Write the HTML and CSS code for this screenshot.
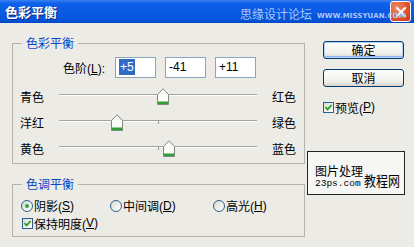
FILE: index.html
```html
<!DOCTYPE html>
<html lang="zh-CN">
<head>
  <meta charset="UTF-8">
  <title>色彩平衡</title>
  <link rel="stylesheet" href="styles.css">
</head>
<body>
  <div class="dialog">
    <div class="titlebar">
      <span class="title">色彩平衡</span>
      <span class="close">
        <svg width="12" height="12" viewBox="0 0 12 12"><path d="M2 2 L10 10 M10 2 L2 10" stroke="#fff" stroke-width="2.2" stroke-linecap="round"/></svg>
      </span>
      <span class="brand"><span class="brand-cn">思缘设计论坛</span><span class="brand-en">WWW.MISSYUAN.COM</span></span>
    </div>

    <div class="content">
      <div class="left">
        <fieldset class="group group-color">
          <legend>色彩平衡</legend>
          <div class="levels">
            <span class="levels-label">色阶(<u>L</u>):</span>
            <span class="field"><span class="sel">+5</span></span>
            <span class="field">-41</span>
            <span class="field">+11</span>
          </div>

          <div class="slider-row">
            <span class="side-a">青色</span>
            <div class="track">
              <span class="thumb" style="left:98px"><svg width="12" height="17" viewBox="0 0 12 17"><path d="M0.5 6.5 L6 0.8 L11.5 6.5 V16.5 H0.5 Z" fill="#fbfbf7" stroke="#7f8a7f"/><rect x="1" y="13.5" width="10" height="2.5" fill="#2f9e36"/></svg></span>
            </div>
            <span class="side-b">红色</span>
          </div>
          <div class="slider-row">
            <span class="side-a">洋红</span>
            <div class="track">
              <span class="thumb" style="left:52px"><svg width="12" height="17" viewBox="0 0 12 17"><path d="M0.5 6.5 L6 0.8 L11.5 6.5 V16.5 H0.5 Z" fill="#fbfbf7" stroke="#7f8a7f"/><rect x="1" y="13.5" width="10" height="2.5" fill="#2f9e36"/></svg></span>
            </div>
            <span class="side-b">绿色</span>
          </div>
          <div class="slider-row">
            <span class="side-a">黄色</span>
            <div class="track">
              <span class="thumb" style="left:104px"><svg width="12" height="17" viewBox="0 0 12 17"><path d="M0.5 6.5 L6 0.8 L11.5 6.5 V16.5 H0.5 Z" fill="#fbfbf7" stroke="#7f8a7f"/><rect x="1" y="13.5" width="10" height="2.5" fill="#2f9e36"/></svg></span>
            </div>
            <span class="side-b">蓝色</span>
          </div>
        </fieldset>

        <fieldset class="group group-tone">
          <legend>色调平衡</legend>
          <div class="radios">
            <span class="radio-item"><span class="radio checked"></span>阴影(<u>S</u>)</span>
            <span class="radio-item"><span class="radio"></span>中间调(<u>D</u>)</span>
            <span class="radio-item"><span class="radio"></span>高光(<u>H</u>)</span>
          </div>
          <div class="check-row">
            <span class="checkbox"><svg width="9" height="9" viewBox="0 0 9 9"><path d="M1.5 4.2 L3.6 6.4 L7.6 2" fill="none" stroke="#21a121" stroke-width="1.8"/></svg></span>保持明度(<u>V</u>)
          </div>
        </fieldset>
      </div>

      <div class="right">
        <button class="btn btn-default">确定</button>
        <button class="btn">取消</button>
        <div class="check-row preview">
          <span class="checkbox"><svg width="9" height="9" viewBox="0 0 9 9"><path d="M1.5 4.2 L3.6 6.4 L7.6 2" fill="none" stroke="#21a121" stroke-width="1.8"/></svg></span>预览(<u>P</u>)
        </div>
        <div class="stamp">
          <div class="stamp-lines">
            <span class="stamp-cn">图片处理</span>
            <span class="stamp-url">23ps.com</span>
          </div>
          <span class="stamp-big">教程网</span>
        </div>
      </div>
    </div>
  </div>
</body>
</html>
```

FILE: styles.css
```css
body {
  margin: 0;
  background: #ecebe6;
  font-family: "Liberation Sans", "Noto Sans CJK SC", sans-serif;
  font-size: 12px;
  color: #000;
}

.dialog {
  width: 414px;
  height: 247px;
  overflow: hidden;
}

/* title bar */
.titlebar {
  position: relative;
  height: 23px;
  display: flex;
  align-items: center;
  padding-left: 5px;
  background: linear-gradient(to bottom, #3a80f3 0%, #0d60e8 15%, #0a5ae4 55%, #0654dc 85%, #0048c4 100%);
}

.title {
  color: #fff;
  font-family: "Noto Sans CJK SC", sans-serif;
  font-weight: bold;
  font-size: 13px;
  line-height: 14px;
  margin-top: 1px;
  text-shadow: 1px 1px 0 #0a2c8a;
}

.brand {
  position: absolute;
  left: 240px;
  top: 7px;
  z-index: 2;
  display: flex;
  align-items: flex-end;
  white-space: nowrap;
  color: #a9c6f8;
}

.brand-cn {
  font-family: "Noto Sans CJK SC", sans-serif;
  font-size: 12px;
  line-height: 14px;
}

.brand-en {
  margin-left: 5px;
  font-family: "DejaVu Sans", sans-serif;
  font-weight: bold;
  font-size: 7px;
  line-height: 10px;
  letter-spacing: 0.1px;
}

.close {
  position: absolute;
  left: 390px;
  top: 1px;
  width: 19px;
  height: 19px;
  border: 1px solid #fff;
  border-radius: 3px;
  background: radial-gradient(circle at 30% 30%, #f08a6a, #e0502a 60%, #c8361a);
  display: flex;
  align-items: center;
  justify-content: center;
}

/* body */
.content {
  display: flex;
}

.left {
  width: 293px;
  margin-left: 12px;
}

.group {
  margin: 13px 0 0;
  padding: 6px 0 6px;
  border: 1px solid #b3b3ab;
  min-width: 0;
}

.group legend {
  margin-left: 9px;
  padding: 0 4px;
  color: #0a46c8;
  font-family: "Noto Sans CJK SC", sans-serif;
  line-height: 14px;
}

.levels {
  display: flex;
  align-items: center;
  gap: 9px;
  margin-top: 1px;
}

.levels-label {
  width: 92px;
  margin-right: 1px;
  text-align: right;
}

.field {
  width: 41px;
  height: 21px;
  box-sizing: border-box;
  border: 1px solid #8aa5c0;
  background: #fff;
  padding-left: 3px;
  line-height: 19px;
}

.sel {
  background: #316ac5;
  color: #fff;
  padding: 1px 1px;
}

.slider-row {
  display: flex;
  align-items: center;
  height: 17px;
  margin-top: 9px;
  padding-left: 7px;
}

.levels + .slider-row {
  margin-top: 10px;
}

.side-a {
  width: 39px;
}

.side-b {
  margin-left: 15px;
}

.track {
  position: relative;
  width: 198px;
  height: 17px;
}

.track::before {
  content: "";
  position: absolute;
  left: 0;
  right: 0;
  top: 6px;
  height: 1px;
  background: #a3a39c;
  box-shadow: 0 1px 0 #fff;
}

.track::after {
  content: "";
  position: absolute;
  left: 99px;
  top: 6px;
  width: 1px;
  height: 4px;
  background: #9a9a94;
}

.thumb {
  position: absolute;
  top: 0;
  z-index: 1;
  line-height: 0;
}

.radios {
  display: grid;
  grid-template-columns: 89px 103px auto;
  padding-left: 8px;
  height: 14px;
  align-items: center;
}

.radio-item {
  display: flex;
  align-items: center;
}

.radio {
  width: 10px;
  height: 10px;
  border: 1px solid #2b5f8f;
  border-radius: 50%;
  background: linear-gradient(135deg, #dcdcd2, #fff);
  margin-right: 1px;
  position: relative;
}

.radio.checked::after {
  content: "";
  position: absolute;
  left: 3px;
  top: 3px;
  width: 4px;
  height: 4px;
  border-radius: 50%;
  background: #2fa83a;
}

.check-row {
  display: flex;
  align-items: center;
  height: 14px;
  margin-top: 5px;
  padding-left: 9px;
}

.checkbox {
  width: 9px;
  height: 9px;
  border: 1px solid #2b5f8f;
  background: linear-gradient(135deg, #dcdcd2, #fff);
  margin-right: 1px;
  display: flex;
  line-height: 0;
}

/* right column */
.right {
  display: flex;
  flex-direction: column;
  align-items: flex-start;
  margin-left: 2px;
}

.btn {
  width: 81px;
  height: 18px;
  margin: 18px 0 0 16px;
  padding: 0;
  border: 1px solid #003c74;
  border-radius: 3px;
  background: linear-gradient(to bottom, #fff, #f1f0eb 70%, #d8d6cc);
  font-family: "Noto Sans CJK SC", sans-serif;
  font-size: 12px;
  line-height: 16px;
  color: #000;
}

.btn + .btn {
  margin-top: 10px;
}

.btn-default {
  box-shadow: inset 0 0 0 1px #b9d1f8, inset 0 -1px 0 1px #8fb3ef;
}

.preview {
  margin: 13px 0 0 16px;
  padding-left: 0;
}

.stamp {
  margin-top: 37px;
  width: 89px;
  height: 37px;
  padding: 0 0 5px 7px;
  border: 1px solid #222;
  background: #f6f6f4;
  display: flex;
  align-items: flex-end;
  white-space: nowrap;
}

.stamp-lines {
  display: flex;
  flex-direction: column;
}

.stamp-cn {
  font-family: "Noto Sans CJK SC", sans-serif;
  font-size: 12px;
  line-height: 16px;
}

.stamp-url {
  font-family: "Liberation Mono", monospace;
  font-size: 9.5px;
  line-height: 10px;
}

.stamp-big {
  margin-left: 1px;
  font-family: "Noto Sans CJK SC", sans-serif;
  font-size: 12px;
  line-height: 16px;
  transform: scaleY(1.15);
  transform-origin: bottom;
}
```
